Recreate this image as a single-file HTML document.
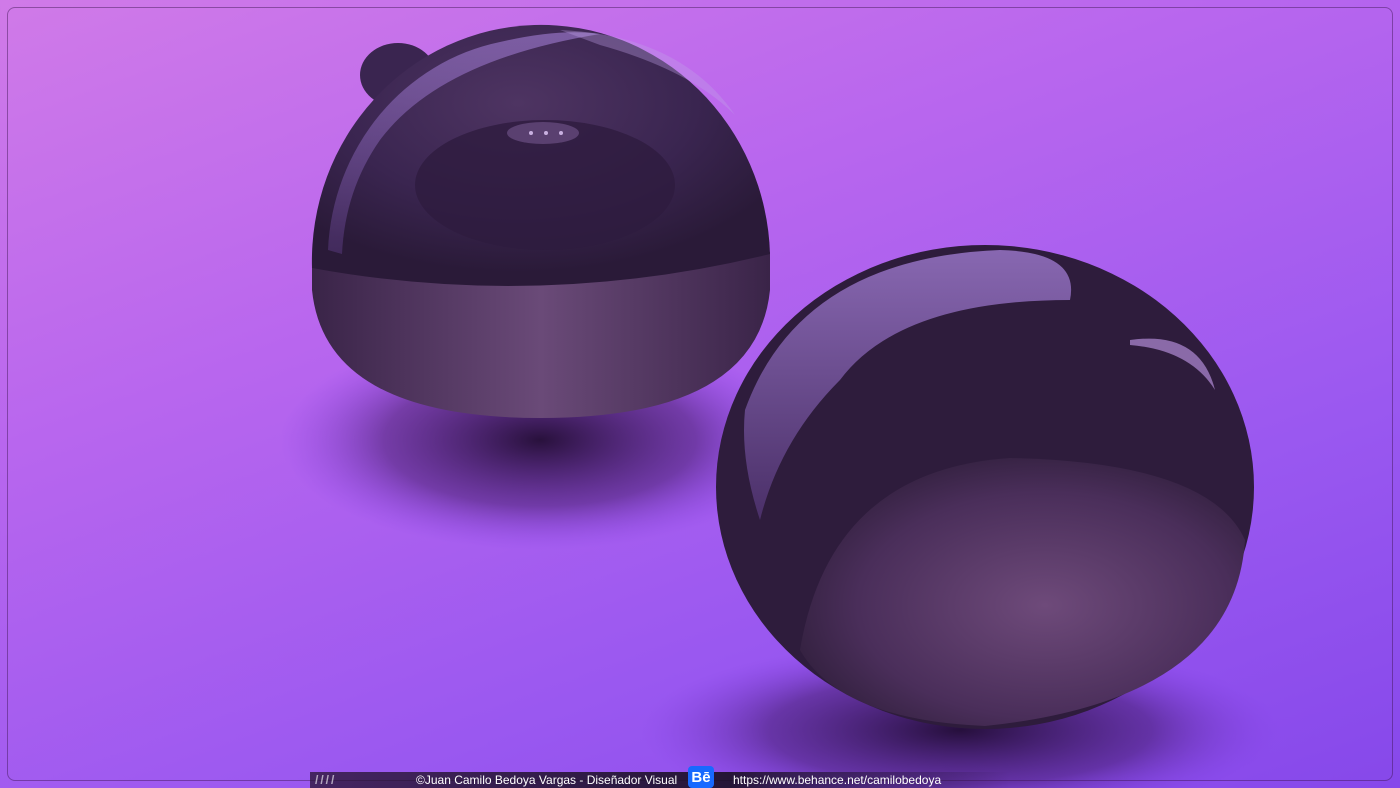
<!DOCTYPE html><html><head><style>
html,body{margin:0;padding:0;width:1400px;height:788px;overflow:hidden}
body{position:relative;background:linear-gradient(160deg,#d07ae8 0%,#b866ee 35%,#9a58f0 70%,#8648ea 100%)}
.frame{position:absolute;left:7px;top:7px;right:7px;bottom:7px;border:1px solid rgba(60,20,80,.45);border-radius:8px}
.bar{position:absolute;left:310px;top:772px;width:700px;height:16px;background:linear-gradient(90deg,rgba(40,20,50,.75),rgba(25,15,35,.9) 60%,rgba(25,15,35,0));font:12px "Liberation Sans",sans-serif;color:#fff}
.bar span{position:absolute;top:1px;white-space:nowrap}
.be{position:absolute;left:378px;top:-6px;width:26px;height:22px;background:#1769ff;border-radius:4px;font-weight:bold;font-size:15px;text-align:center;line-height:24px}
</style></head><body>
<svg width="1400" height="788" style="position:absolute;left:0;top:0">
<defs>
<radialGradient id="sh" cx="50%" cy="50%" r="50%"><stop offset="0" stop-color="#1a0828" stop-opacity=".9"/><stop offset=".6" stop-color="#3a1660" stop-opacity=".5"/><stop offset="1" stop-color="#7a3ae0" stop-opacity="0"/></radialGradient>
<radialGradient id="d1" cx="45%" cy="30%" r="65%"><stop offset="0" stop-color="#4e3462"/><stop offset=".6" stop-color="#3a2550"/><stop offset="1" stop-color="#2a1a38"/></radialGradient>
<linearGradient id="b1" x1="0" x2="1"><stop offset="0" stop-color="#3a2448"/><stop offset=".5" stop-color="#6a4a78"/><stop offset="1" stop-color="#3a2448"/></linearGradient>
<radialGradient id="d2" cx="55%" cy="55%" r="60%"><stop offset="0" stop-color="#6e4a7a"/><stop offset=".7" stop-color="#4a2e5a"/><stop offset="1" stop-color="#32203e"/></radialGradient>
<linearGradient id="hl" x1="0" y1="0" x2="0" y2="1"><stop offset="0" stop-color="#b890f0"/><stop offset="1" stop-color="#5a3a80"/></linearGradient>
</defs>
<ellipse cx="540" cy="440" rx="260" ry="110" fill="url(#sh)"/>
<ellipse cx="960" cy="730" rx="320" ry="90" fill="url(#sh)"/>
<!-- sphere 1 -->
<ellipse cx="398" cy="75" rx="38" ry="32" fill="#3a2550"/>
<path d="M312 262 L312 290 Q325 418 541 418 Q757 418 770 290 L770 252 Q541 310 312 262 Z" fill="url(#b1)"/>
<path d="M312 268 A229 236 0 0 1 770 254 Q541 310 312 268 Z" fill="url(#d1)"/>
<path d="M328 250 A214 222 0 0 1 500 42 Q560 28 600 34 Q440 60 380 140 Q345 190 342 254 Z" fill="url(#hl)" opacity=".5"/>
<path d="M560 30 Q680 35 735 115 Q690 70 600 45 Z" fill="#c0a0e8" opacity=".35"/>
<ellipse cx="545" cy="185" rx="130" ry="65" fill="#2e1c3e" opacity=".8"/>
<ellipse cx="543" cy="133" rx="36" ry="11" fill="#5a4070"/>
<circle cx="531" cy="133" r="2" fill="#c9b0e0"/><circle cx="546" cy="133" r="2" fill="#c9b0e0"/><circle cx="561" cy="133" r="2" fill="#c9b0e0"/>
<!-- sphere 2 -->
<ellipse cx="985" cy="487" rx="269" ry="242" fill="#2e1c3c"/>
<path d="M800 650 Q830 470 1010 458 Q1210 462 1245 540 Q1235 700 985 726 Q840 720 800 650 Z" fill="url(#d2)"/>
<path d="M745 410 Q800 258 1000 250 Q1080 252 1070 300 Q900 300 840 380 Q780 440 760 520 Q740 460 745 410 Z" fill="url(#hl)" opacity=".65"/>
<path d="M1130 340 Q1200 330 1215 390 Q1190 350 1130 345 Z" fill="#8a6aa8"/>
</svg>
<div class="frame"></div>
<div class="bar"><span style="left:5px;color:#fff;letter-spacing:2px;font-weight:bold;opacity:.6">////</span><span style="left:106px">©Juan Camilo Bedoya Vargas - Diseñador Visual</span><div class="be">Bē</div><span style="left:423px">https://www.behance.net/camilobedoya</span></div>
</body></html>
